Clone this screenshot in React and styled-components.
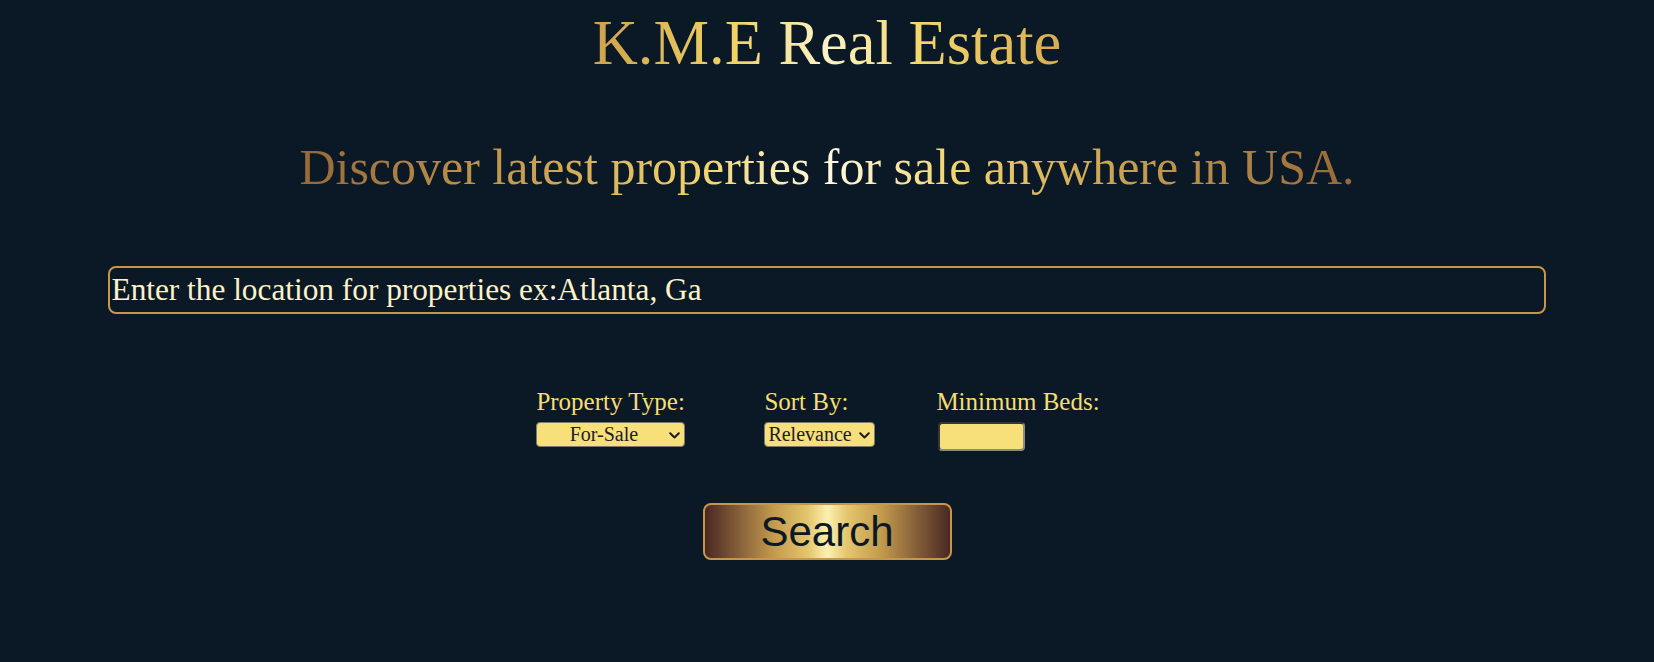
import React from "react";
import styled, { createGlobalStyle } from "styled-components";

const GlobalStyle = createGlobalStyle`
  html, body {
    margin: 0;
    padding: 0;
    background: #0b1927;
  }
  body {
    font-family: "Liberation Serif", "Times New Roman", serif;
    min-height: 662px;
  }
`;

const Page = styled.main`
  display: flex;
  flex-direction: column;
  align-items: center;
  padding-top: 7px;
  min-height: 655px;
  background: #0b1927;
`;

const goldText = `
  -webkit-background-clip: text;
  background-clip: text;
  color: transparent;
  -webkit-text-fill-color: transparent;
`;

const Title = styled.h1`
  margin: 0;
  font-family: "Liberation Serif", "Times New Roman", serif;
  font-weight: normal;
  font-size: 62.5px;
  line-height: 72px;
  background-image: linear-gradient(
    90deg,
    #cfa24c 0%,
    #f0d364 30%,
    #fbf3c8 50%,
    #f2d76a 70%,
    #d8ac52 100%
  );
  ${goldText}
`;

const Subtitle = styled.h2`
  margin: 59px 0 0;
  font-family: "Liberation Serif", "Times New Roman", serif;
  font-weight: normal;
  font-size: 50px;
  line-height: 58px;
  background-image: linear-gradient(
    90deg,
    #946838 0%,
    #c49a50 20%,
    #f0d26c 38%,
    #fffbe2 50%,
    #f2d470 62%,
    #c49a50 80%,
    #946838 100%
  );
  ${goldText}
`;

const SearchInput = styled.input`
  box-sizing: border-box;
  margin-top: 70px;
  width: 87%;
  height: 48px;
  padding: 0 2px;
  background: transparent;
  border: 2px solid #c8964a;
  border-radius: 8px;
  font-family: "Liberation Serif", "Times New Roman", serif;
  font-size: 31.3px;
  color: #fdf2c8;
  outline: none;

  &::placeholder {
    color: #fdf2c8;
    opacity: 1;
  }
`;

const Filters = styled.div`
  display: flex;
  justify-content: center;
  align-items: flex-start;
  margin-top: 74px;
  padding-right: 18px;
`;

const FilterGroup = styled.div`
  display: flex;
  flex-direction: column;
  align-items: flex-start;
  margin-right: ${(p) => p.$gap || 0}px;
`;

const Label = styled.label`
  font-family: "Liberation Serif", "Times New Roman", serif;
  font-size: 25px;
  line-height: 28px;
  color: #f6dd74;
  white-space: nowrap;
  margin-bottom: 6px;
`;

const SelectWrap = styled.div`
  position: relative;
  width: ${(p) => p.$w}px;
  height: 25px;
`;

const Select = styled.select`
  box-sizing: border-box;
  appearance: none;
  -webkit-appearance: none;
  width: 100%;
  height: 100%;
  margin: 0;
  padding: 0 ${(p) => (p.$center ? "18px" : "16px")} 0 ${(p) => (p.$center ? "4px" : "3px")};
  background-color: #f7df7a;
  border: 1px solid #7a7a72;
  border-radius: 4px;
  font-family: "Liberation Serif", "Times New Roman", serif;
  font-size: 20px;
  line-height: 23px;
  color: #1d1b2c;
  text-align: ${(p) => (p.$center ? "center" : "left")};
  text-align-last: ${(p) => (p.$center ? "center" : "left")};
  outline: none;
`;

const Chevron = styled.svg`
  position: absolute;
  right: 5px;
  top: 50%;
  width: 11px;
  height: 7px;
  margin-top: -3px;
  pointer-events: none;
`;

const BedsInput = styled.input`
  box-sizing: border-box;
  width: 87px;
  height: 29px;
  margin: 0 0 0 2px;
  background: #f7df7a;
  border: 2px inset #8a8a8a;
  border-radius: 4px;
  font-family: "Liberation Serif", "Times New Roman", serif;
  font-size: 19px;
`;

const SearchButton = styled.button`
  box-sizing: border-box;
  margin-top: 52px;
  width: 249px;
  height: 57px;
  padding: 0;
  border: 2px solid #c8964a;
  border-radius: 8px;
  background: linear-gradient(
    90deg,
    #4a2822 0%,
    #86603a 14%,
    #c39a4c 28%,
    #e4c66c 42%,
    #fbf0b2 50%,
    #e4c66c 58%,
    #c39a4c 72%,
    #86603a 86%,
    #4a2822 100%
  );
  font-family: "Liberation Sans", Arial, sans-serif;
  font-size: 42px;
  line-height: 53px;
  color: #0b1826;
  cursor: pointer;
`;

function ChevronIcon() {
  return (
    <Chevron viewBox="0 0 11 7" aria-hidden="true">
      <path
        d="M1.2 1.2 L5.5 5.5 L9.8 1.2"
        fill="none"
        stroke="#1d1b2c"
        strokeWidth="2"
        strokeLinecap="round"
        strokeLinejoin="round"
      />
    </Chevron>
  );
}

export default function App() {
  return (
    <>
      <GlobalStyle />
      <Page>
        <Title>K.M.E Real Estate</Title>
        <Subtitle>Discover latest properties for sale anywhere in USA.</Subtitle>
        <SearchInput
          type="text"
          placeholder="Enter the location for properties ex:Atlanta, Ga"
        />
        <Filters>
          <FilterGroup $gap={79}>
            <Label>Property Type:</Label>
            <SelectWrap $w={149}>
              <Select $center defaultValue="for-sale">
                <option value="for-sale">For-Sale</option>
                <option value="for-rent">For-Rent</option>
              </Select>
              <ChevronIcon />
            </SelectWrap>
          </FilterGroup>
          <FilterGroup $gap={61}>
            <Label>Sort By:</Label>
            <SelectWrap $w={111}>
              <Select defaultValue="relevance">
                <option value="relevance">Relevance</option>
                <option value="newest">Newest</option>
              </Select>
              <ChevronIcon />
            </SelectWrap>
          </FilterGroup>
          <FilterGroup>
            <Label>Minimum Beds:</Label>
            <BedsInput type="number" />
          </FilterGroup>
        </Filters>
        <SearchButton>Search</SearchButton>
      </Page>
    </>
  );
}
